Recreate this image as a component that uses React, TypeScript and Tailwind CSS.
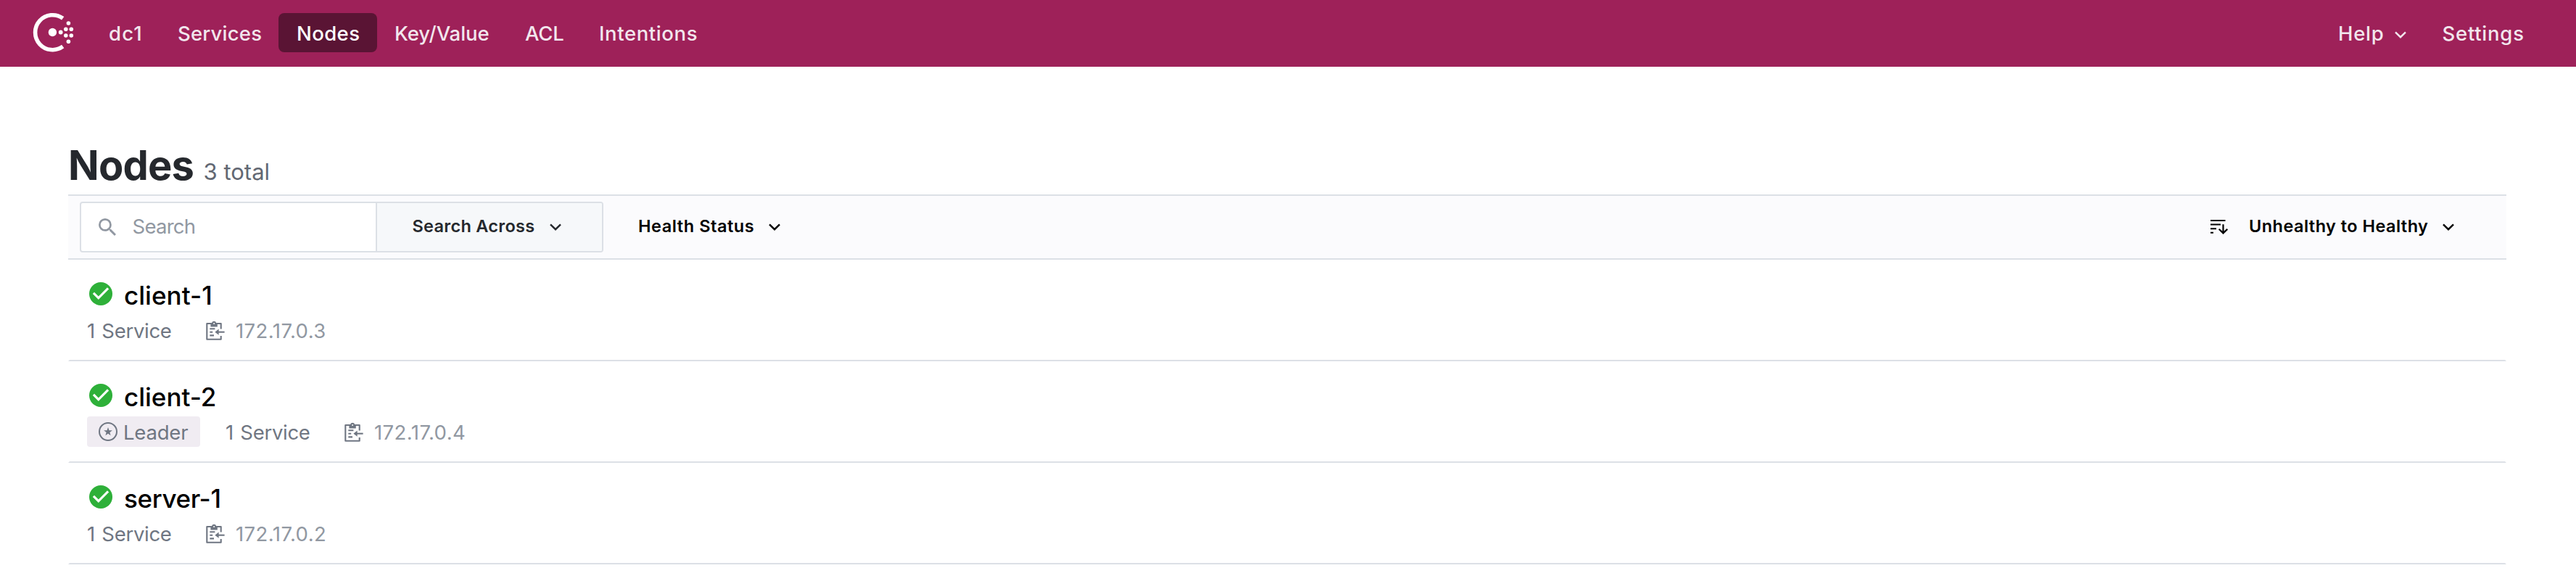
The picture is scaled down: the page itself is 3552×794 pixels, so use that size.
import React from "react";

function ConsulLogo() {
  return (
    <svg className="h-[60px] w-[60px] shrink-0" viewBox="44 16 60 60" fill="#fff">
      <path d="M86.7 25.3A24 24 0 1 0 86.7 64.1" fill="none" stroke="#fff" strokeWidth="5.6" />
      <circle cx="72.4" cy="44.5" r="5.7" />
      <circle cx="83.7" cy="44.5" r="2.9" />
      <circle cx="94.4" cy="32" r="2.8" />
      <circle cx="90.8" cy="40.2" r="2.8" />
      <circle cx="98.3" cy="40.2" r="2.8" />
      <circle cx="90.8" cy="49" r="2.8" />
      <circle cx="98.3" cy="49" r="2.8" />
      <circle cx="94.4" cy="57.3" r="2.8" />
    </svg>
  );
}

function Chevron({ className = "" }: { className?: string }) {
  return (
    <svg className={`h-[10px] w-4 shrink-0 ${className}`} viewBox="0 0 16 10" fill="none" stroke="currentColor" strokeWidth="2.4">
      <path d="M1 1.3L8 8.2L15 1.3" />
    </svg>
  );
}

function SearchIcon() {
  return (
    <svg className="h-6 w-6 shrink-0" viewBox="3 3 17.5 17.5" fill="#9198a2">
      <path d="M15.5 14h-.79l-.28-.27A6.471 6.471 0 0 0 16 9.5 6.5 6.5 0 1 0 9.5 16c1.61 0 3.09-.59 4.23-1.57l.27.28v.79l5 4.99L20.49 19l-4.99-5zm-6 0C7.01 14 5 11.99 5 9.5S7.01 5 9.5 5 14 7.01 14 9.5 11.99 14 9.5 14z" />
    </svg>
  );
}

function SortIcon() {
  return (
    <svg className="h-[22px] w-6 shrink-0" viewBox="0 0 24 22" fill="none" stroke="#000" strokeWidth="2">
      <path d="M0 2H20.5M0 7.6H14M0 13.2H8M0 18.7H4" />
      <path d="M17.5 7.3V19M11.7 13.8L17.5 19.4L23.3 13.8" strokeWidth="2.2" />
    </svg>
  );
}

function CheckIcon() {
  return (
    <svg className="mt-1 h-8 w-8 shrink-0" viewBox="2 2 20 20">
      <circle cx="12" cy="12" r="10" fill="#2eb039" />
      <path d="M10 17L5 12l1.41-1.41L10 14.17l7.59-7.59L19 8z" fill="#fff" />
    </svg>
  );
}

function AddressIcon() {
  return (
    <svg className="mt-[9px] h-[26px] w-[26px] shrink-0 overflow-visible" viewBox="0 0 26 26" fill="none" stroke="#6f7682" strokeWidth="2.1">
      <path d="M20.7 10.5V3H1.3V24.7H20.7V20" strokeLinejoin="round" />
      <path d="M5.3 10.2H12.4M5.3 14.8H9.2M5.3 19.4H11" />
      <path d="M14.5 14.7H25.6" />
      <path d="M12.4 14.7L17.6 10.6V18.8Z" fill="#6f7682" stroke="none" />
      <path d="M6.4 2.2V7.4H15.8V2.2H14.2A3.2 3.2 0 0 0 8 2.2Z" fill="#6f7682" stroke="none" />
      <circle cx="11.1" cy="3" r="1" fill="#fff" stroke="none" />
    </svg>
  );
}

function LeaderIcon() {
  return (
    <svg className="mt-2 h-[26px] w-[26px] shrink-0" viewBox="0 0 26 26">
      <circle cx="13" cy="13" r="12" fill="none" stroke="#6f7682" strokeWidth="2" />
      <path d="M13 7L14.5 11.2L18.9 11.3L15.4 14L16.6 18.3L13 15.8L9.4 18.3L10.6 14L7.1 11.3L11.5 11.2Z" fill="#6f7682" />
    </svg>
  );
}

type Node = { name: string; spacing: string; ip: string; leader?: boolean };

const nodes: Node[] = [
  { name: "client-1", spacing: "tracking-[0.05px]", ip: "172.17.0.3" },
  { name: "client-2", spacing: "tracking-[0px]", ip: "172.17.0.4", leader: true },
  { name: "server-1", spacing: "tracking-[-0.35px]", ip: "172.17.0.2" },
];

const navItems = [
  { label: "dc1", box: "w-24 pl-[25px] tracking-[1.2px]" },
  { label: "Services", box: "w-[163px] pl-6 tracking-[0.2px]" },
  { label: "Nodes", box: "w-[136px] pl-[25px] tracking-[0.4px]", active: true },
  { label: "Key/Value", box: "w-[180px] pl-6 tracking-[-0.07px]" },
  { label: "ACL", box: "w-[102px] pl-6 tracking-[-0.2px]" },
  { label: "Intentions", box: "w-[184px] pl-6 tracking-[0.6px]" },
];

function NodeRow({ node }: { node: Node }) {
  return (
    <li className="flex h-[140px] flex-col border-2 border-x-transparent border-t-transparent border-b-[#dce0e6] pt-[25px] pl-6">
      <div className="flex h-11 items-start pl-[3px]">
        <CheckIcon />
        <span className={`ml-4 text-[35px] leading-[44px] font-medium text-black ${node.spacing}`}>{node.name}</span>
      </div>
      <div className="mt-[5px] flex h-[42px] items-start text-[27.5px] leading-[44px] text-[#6f7682]">
        {node.leader && (
          <span className="mr-[35px] flex h-[42px] w-[156px] items-start rounded bg-[#f0ecf2] pl-[15.5px]">
            <LeaderIcon />
            <span className="ml-[8.5px] tracking-[-0.2px]">Leader</span>
          </span>
        )}
        <span className="w-[164px] tracking-[-0.3px] [word-spacing:2px]">1 Service</span>
        <AddressIcon />
        <span className="ml-[15px] tracking-[0.43px] text-[#9198a2]">{node.ip}</span>
      </div>
    </li>
  );
}

export default function App() {
  return (
    <div className="h-[794px] w-full overflow-hidden bg-white font-['Inter',sans-serif] whitespace-nowrap">
      <header className="flex h-[92px] items-start justify-between bg-[#9e2159] text-[27.5px] leading-[56px] font-medium text-[#f2e6ed]">
        <div className="flex items-start pt-[18px] pl-11">
          <div className="-mt-0.5 w-[81px]">
            <ConsulLogo />
          </div>
          <nav className="flex">
            {navItems.map((item) => (
              <a
                key={item.label}
                className={`h-[54px] ${item.box} ${item.active ? "rounded-lg bg-[#5a1434] text-white" : ""}`}
              >
                {item.label}
              </a>
            ))}
          </nav>
        </div>
        <div className="flex w-[328px] items-start pt-[18px]">
          <span className="w-[78px] tracking-[0.7px]">Help</span>
          <Chevron className="mt-[25px]" />
          <span className="ml-[49.5px] tracking-[0.75px]">Settings</span>
        </div>
      </header>

      <main className="pt-[106px] pr-24 pl-[94px]">
        <div className="mb-[10px] flex h-[60px] items-baseline">
          <h1 className="text-[56px] leading-[60px] font-bold tracking-[-0.8px] text-[#25282d]">Nodes</h1>
          <span className="ml-[13.5px] text-[31px] leading-[40px] text-[#626873]">3 total</span>
        </div>

        <div className="flex h-[90px] items-center border-y-2 border-[#dce0e6] bg-[#fbfbfd] pl-4 text-[23.5px] font-[560] text-black">
          <div className="flex h-[70px] w-[722px] overflow-hidden rounded border-2 border-[#dce0e6] bg-white">
            <div className="flex w-[408px] items-center border-r-2 border-[#dce0e6] pl-6">
              <SearchIcon />
              <span className="ml-[22.5px] text-[27.5px] font-normal tracking-[-0.75px] text-[#9198a2]">Search</span>
            </div>
            <div className="flex flex-1 items-center bg-[#f6f8fa] pl-[48.5px] text-[#25282d]">
              <span className="w-[189.5px] pb-[2px] tracking-[0.3px]">Search Across</span>
              <Chevron />
            </div>
          </div>
          <div className="ml-12 flex items-center">
            <span className="w-[180px] pb-[2px] tracking-[0.55px]">Health Status</span>
            <Chevron />
          </div>
          <div className="mr-[72px] ml-auto flex items-center">
            <SortIcon />
            <span className="ml-[29px] w-[267px] pb-[2px] tracking-[0.45px]">Unhealthy to Healthy</span>
            <Chevron />
          </div>
        </div>

        <ul>
          {nodes.map((node) => (
            <NodeRow key={node.name} node={node} />
          ))}
        </ul>
      </main>
    </div>
  );
}
